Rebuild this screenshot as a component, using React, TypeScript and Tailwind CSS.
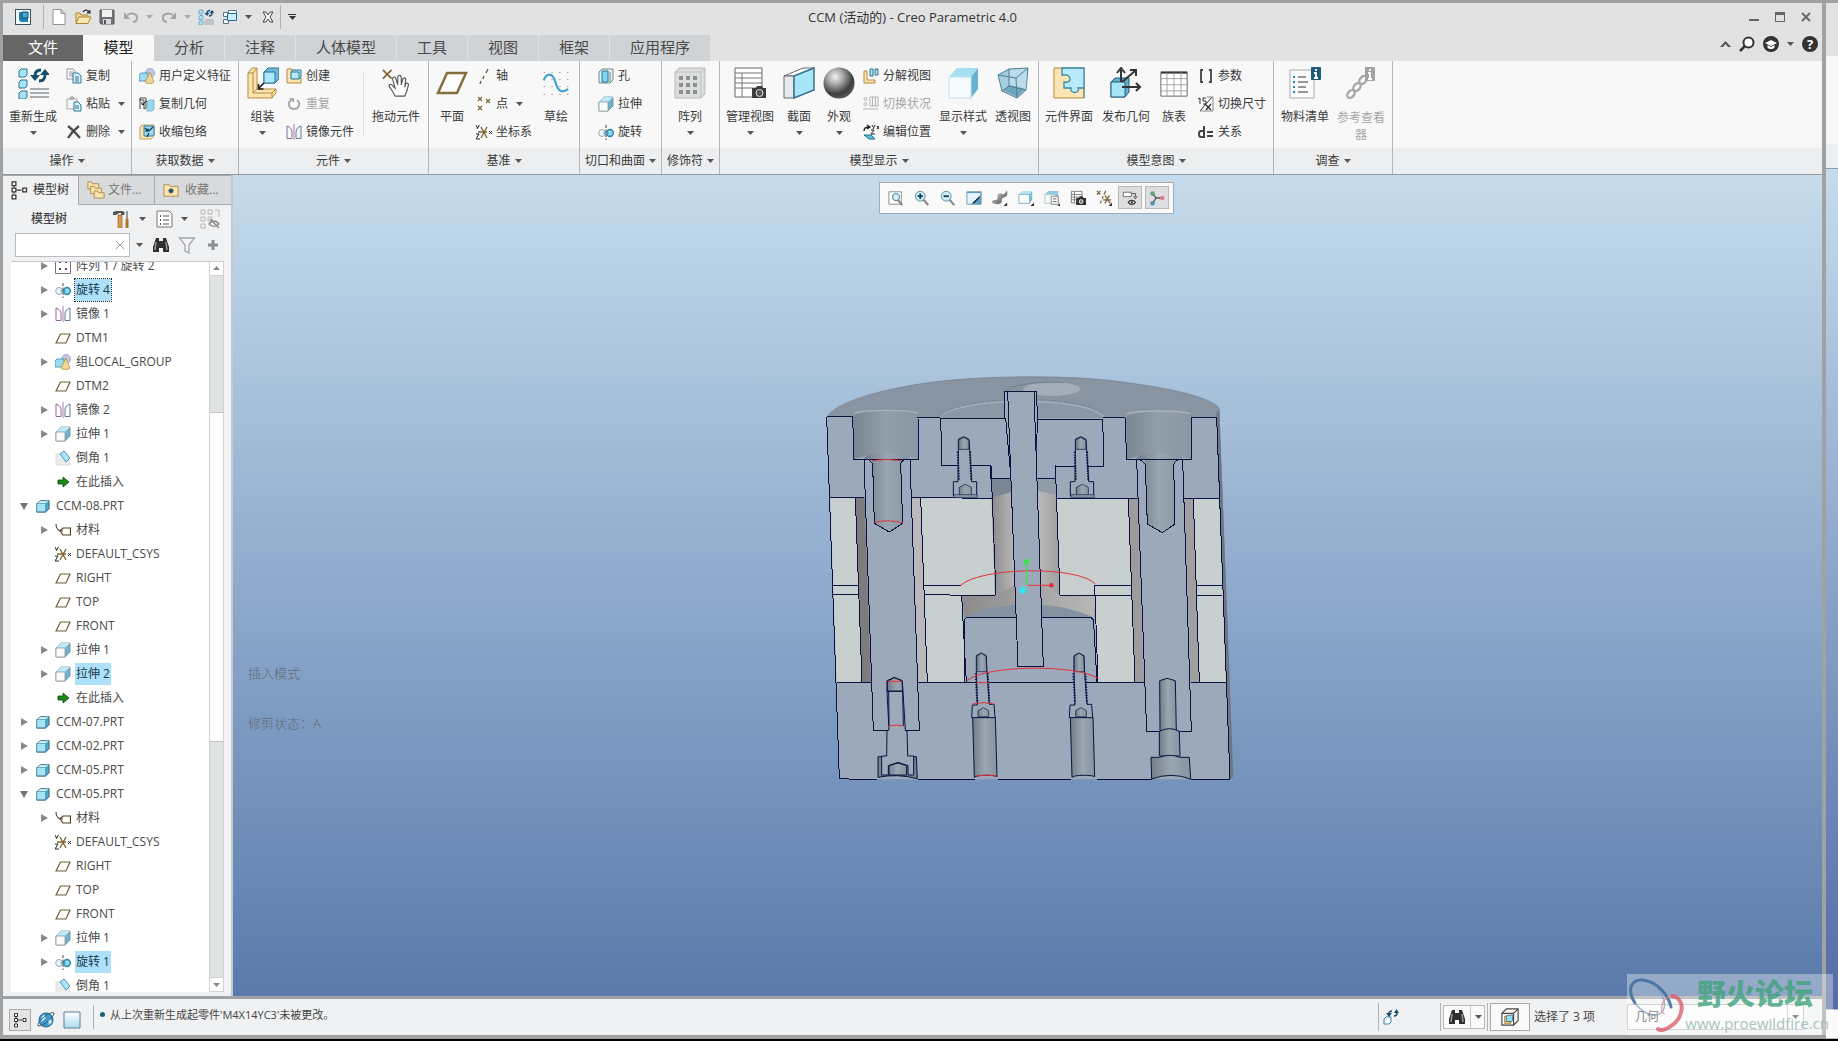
import { ReactNode } from "react";

// each entry: [viewBox side, drawing]
const art: Record<string, [number, ReactNode]> = {
  creo: [16, <><rect x="0.5" y="0.5" width="15" height="15" fill="#f4fafc" stroke="#35505f" /><path d="M4 3h9v10H6l-2-2z" fill="#1c84ae" /><path d="M7 3h6v6H7z" fill="#49a9cd" stroke="#0e4f6d" /></>],
  newFile: [16, <path d="M2 .5h8l4 4v11H2zM10 .5v4h4" fill="#fff" stroke="#8b9298" />],
  open: [16, <><path d="M1 14V4h4l1 2h7v3" fill="#f3d68f" stroke="#a98534" /><path d="M1 14.500 4 8h12l-3 6.500z" fill="#fbe7b4" stroke="#a98534" /><path d="M8 3c2-3 5-2 6 0M12 3.500l3 .5-.3-3" fill="none" stroke="#333" strokeWidth="1.300" /></>],
  save: [16, <><path d="M1 1h14v14H2l-1-1z" fill="#6f7377" stroke="#55595c" /><path d="M3 1h10v7H3z" fill="#f1f1f1" /><path d="M4 10h8v5H4z" fill="#d8dadb" /><path d="M5 11h2v4H5z" fill="#555" /></>],
  undo: [16, <><path d="M4 6c5-3 11-1 10 4-.5 2-2 3-4 3" fill="none" stroke="#a2a4a6" strokeWidth="2" /><path d="M1 3v7h6z" fill="#a2a4a6" /></>],
  redo: [16, <><path d="M12 6C7 3 1 5 2 10c.5 2 2 3 4 3" fill="none" stroke="#a2a4a6" strokeWidth="2" /><path d="M15 3v7H9z" fill="#a2a4a6" /></>],
  regen: [32, <>
    <g fill="#a5e3f8" stroke="#35708b"><path d="M2 4l2-2h6v6l-2 2H2zM2 15l2-2h6v6l-2 2H2zM2 26l2-2h6v6l-2 2H2z" /></g>
    <path d="M24 3c-4 0-6 2-6 6M22 14c4 0 6-2 6-6" fill="none" stroke="#174f6c" strokeWidth="2.800" />
    <path d="M13 8h10l-5 6zM23 8h10l-5-6z" fill="#174f6c" />
    <path d="M13 22h19M13 26h19M13 30h19" stroke="#8d9297" strokeWidth="1.600" /></>],
  windows: [16, <g fill="#fff" stroke="#54748a"><path d="M6.500 1.500h8v6h-8z" /><path d="M1.500 3.500h5v4h-5zM1.500 10.500h5v4h-5z" /><path d="M5.500 4.500h9v7h-9z" fill="#c9edfa" stroke="#1c6d90" /></g>],
  closeX: [16, <path d="M3 3h3l2 3 2-3h3l-3 5 3 5h-3l-2-3-2 3H3l3-5z" fill="#f5f5f5" stroke="#444" />],
  copy: [16, <><path d="M1 1h6l2 2v8H1z" fill="#fff" stroke="#8b9298" /><path d="M3 4h4M3 6h4M3 8h4" stroke="#8b9298" /><path d="M7 5h5l3 3v7H7z" fill="#d8f1fb" stroke="#2d7898" /><path d="M9 9h4M9 11h4M9 13h4" stroke="#2d7898" /></>],
  paste: [16, <><path d="M1 3h10v10H1z" fill="#f6f6f6" stroke="#a7abae" /><path d="M4 3c0-3 4-3 4 0z" fill="#ccc" stroke="#999" /><path d="M8 6h4l3 3v6H8z" fill="#d8f1fb" stroke="#2d7898" /><path d="M9 10h4M9 12h4" stroke="#2d7898" /></>],
  del: [16, <path d="M2 2c4 3 8 7 12 12M13 2C9 5 5 9 2 14" fill="none" stroke="#4a4a4a" strokeWidth="2.200" />],
  udf: [16, <><circle cx="11" cy="5" r="4.500" fill="#c3c8e8" stroke="#8b90b5" strokeWidth=".7" /><path d="M0 7l2-2h7v6l-2 2H0z" fill="#9adcf3" stroke="#3f85a2" strokeWidth=".8" /><path d="M11 4l4 10c-2 2-7 2-9 0z" fill="#f2d597" stroke="#b49349" strokeWidth=".8" /></>],
  copyGeom: [16, <><path d="M1 2h6v10l-2 1V4H1zM1 3v10" fill="#fff" stroke="#444" /><path d="M8 6l2-2h5v9l-2 2H8z" fill="#8fdcf5" stroke="#8a9ca5" strokeWidth=".8" /><path d="M4 8l4-3M5 8.500h-2V6" stroke="#222" fill="none" /></>],
  shrink: [16, <><path d="M1 3l2-2h12v11l-3 3H1z" fill="#fae6b5" stroke="#c5a75d" /><path d="M5 2h10v9l-2 1H5z" fill="#9ddcf2" stroke="#387f9c" /><path d="M6 4l3 3M9 4.500V7H6.500M14 3l-4 4M8 13l2-4" stroke="#163c52" strokeWidth="1.300" fill="none" /></>],
  assemble: [32, <><path d="M1 6l4-5h5v21h19v4l-4 5H1z" fill="#fbe4b0" stroke="#b58b3c" /><path d="M1 6h5v20h19v5M6 6l4-5M6 26l4-4M25 26l4-4" fill="none" stroke="#b58b3c" /><path d="M17 5l4-4h11v11l-4 4H17z" fill="#6db9d8" stroke="#2e7391" /><path d="M17 5h11v11H17z" fill="#a9e9fb" stroke="#2e7391" /><path d="M17 16l-5 5M11.500 17v5h5" fill="none" stroke="#222" strokeWidth="1.600" /></>],
  create: [16, <><path d="M1 1h5v9h9v5H1z" fill="#fbe4b0" stroke="#b58b3c" /><path d="M5 4l2-2h8v7l-2 2H5z" fill="#b4e9fa" stroke="#2e7391" /><path d="M5 4h8v7" fill="none" stroke="#2e7391" /></>],
  repeat: [16, <><path d="M5 4c-4 3-2 9 3 9s7-6 3-9" fill="none" stroke="#a9a9a9" strokeWidth="2" /><path d="M3 2h5v5z" fill="#a9a9a9" /></>],
  mirror: [16, <g fill="none"><path d="M1 14.500V2c3 1 5 3 5 6v6.500z" stroke="#8a6a9c" /><path d="M15 14.500V2c-3 1-5 3-5 6v6.500z" stroke="#5b7c9b" /><path d="M8 0v16" stroke="#b07aa8" /></g>],
  drag: [32, <><path d="M1 1l10 10M11 1 1 11" stroke="#80673a" strokeWidth="2" /><path d="M15 31c-2-5-5-8-7-12 1-3 4-1 5 1l2 2-3-11c1-3 4-2 4 1l2 6v-9c1-3 4-2 4 1v8l2-7c2-2 4 0 3 2l-1 8 1-4c2-2 4 0 3 2-1 5-2 8-4 12z" fill="#fff" stroke="#555" strokeWidth="1.300" /></>],
  plane: [32, <path d="M11 6h19l-9 20H2z" fill="#fdfdfd" stroke="#866d3e" strokeWidth="2.500" />],
  planeS: [16, <path d="M5.500 4h9.500l-4 9H1z" fill="#fffef8" stroke="#6f6141" strokeWidth="1.200" />],
  axis: [16, <path d="M12 1 10 5M8 8l-1 3M5 13l-1 3" stroke="#6f5c35" strokeWidth="1.400" />],
  points: [16, <path d="M2 1l4 4M6 1 2 5M10 3l4 4M14 3l-4 4M2 10l4 4M6 10l-4 4" stroke="#826a3e" strokeWidth="1.300" />],
  csys: [16, <><path d="M2 8h9M5 3l6 11M11 3 5 14" stroke="#7d6332" strokeWidth="1.300" /><path d="M0 1l1.500 3M3.500 1 1 5M0 10h3l-3 5h4M13 7l3 3M16 7l-3 3" fill="none" stroke="#222" strokeWidth="1" /></>],
  sketch: [32, <><path d="M2 4h28M2 12h28M2 20h28M2 29h28" stroke="#707070" strokeWidth="1.200" strokeDasharray="1 8" /><path d="M2 13c3-9 10-9 13 1s6 15 15 9" fill="none" stroke="#3fa3cd" strokeWidth="2.500" /></>],
  hole: [16, <><path d="M1 4l3-3h11v11l-3 3H1z" fill="#e5eef2" stroke="#738791" /><path d="M4 3h6v11H4z" fill="#7fd6f2" stroke="#287695" /><path d="M12 4v10" stroke="#738791" /></>],
  extrude: [16, <><path d="M1 6l5-5h9v9l-5 5H1z" fill="#6fb2cf" stroke="#6f8b98" strokeWidth=".8" /><path d="M1 6l5-5h9l-5 5z" fill="#bde8f6" /><path d="M1 6h9v9H1z" fill="#fafafa" stroke="#8e9aa0" strokeWidth=".8" /></>],
  revolve: [16, <><ellipse cx="4" cy="9" rx="3.300" ry="3.500" fill="#eef6f9" stroke="#8eacb9" /><ellipse cx="12" cy="9" rx="3.300" ry="3.500" fill="#8fd7ef" stroke="#2c85a9" strokeWidth="1.400" /><path d="M5 9h6" stroke="#4b8faa" /><path d="M8 1v15" stroke="#444" strokeDasharray="3 1.500" /></>],
  pattern: [32, <><path d="M1 5l4-4h26v26l-4 4H1z" fill="#dcdddd" stroke="#b9babb" /><path d="M1 5h26v26M27 5l4-4" fill="none" stroke="#c3c4c5" /><g fill="#8d9092"><path d="M5 9h4v4H5zM12 9h4v4h-4zM19 9h4v4h-4zM5 16h4v4H5zM12 16h4v4h-4zM19 16h4v4h-4zM5 23h4v4H5zM12 23h4v4h-4zM19 23h4v4h-4z" /></g></>],
  patternS: [16, <><path d="M.5.5h15v15H.500z" fill="#fff" stroke="#777" /><path d="M4 3h2v2H4zM10 3h2v2h-2zM4 10h2v2H4zM10 10h2v2h-2z" fill="#59497a" /></>],
  manage: [32, <><path d="M1 1h27v29H1z" fill="#fff" stroke="#666" /><path d="M1 6h27M1 11h27M1 16h27M1 21h27M8 6v24" stroke="#777" /><path d="M18 21h4l1-2h5l1 2h3v10H18z" fill="#3c3c3c" /><circle cx="25.500" cy="26" r="3.500" fill="#555" stroke="#ddd" /></>],
  viewMgr: [18, <><path d="M1.500 1.500h12v13h-12zM1 5h12M1 8h12M1 11h12M5 2v12" fill="#fff" stroke="#777" /><path d="M7 9h3l1-2h3l1 2h3v8H7z" fill="#2e2e2e" /><circle cx="12.500" cy="13" r="2.200" fill="#777" stroke="#eee" /></>],
  section: [32, <><path d="M1 9 20 1h11L11 9z" fill="#fff" stroke="#667" /><path d="M1 9h10v22H1z" fill="#e8e9ea" stroke="#667" /><path d="M11 9 31 1v22L11 31z" fill="#a6e6f8" stroke="#37718a" strokeWidth="1.500" /></>],
  sphere: [32, <><defs><radialGradient id="ball" cx=".38" cy=".3" r=".7"><stop offset="0" stopColor="#f4f4f4" /><stop offset=".35" stopColor="#a9a9a9" /><stop offset=".8" stopColor="#3c3c3c" /><stop offset="1" stopColor="#555" /></radialGradient></defs><circle cx="16" cy="16" r="15.500" fill="url(#ball)" /></>],
  explode: [16, <><path d="M1 3h3v9h8v3H1z" fill="#fbe4b0" stroke="#b58b3c" /><path d="M7 1h3v7H7zM12 1h3v6h-3z" fill="#a9e2f5" stroke="#2e7391" /></>],
  toggleState: [16, <g fill="none" stroke="#b3b3b3"><circle cx="2.500" cy="3" r="1.500" /><circle cx="2.500" cy="8" r="1.500" /><path d="M7 1h8v9H7zM9.500 1v9M12.500 1v9M0 13h15" /></g>],
  editPos: [16, <><path d="M1 7c0-3 2-4 5-4M4 1l3 2-3 2" fill="none" stroke="#222" strokeWidth="1.300" /><path d="M9 1l1 2M12 1l-2 4M14 2l2 3M16 2l-2 3M8 6h3l-3 4h4" fill="none" stroke="#222" /><path d="M1 11h7l4 4H6z" fill="#5fbfe2" stroke="#1f6f92" /></>],
  style: [32, <><path d="M2 10l8-9h21l-7 9z" fill="#a6dff0" /><path d="M24 10l7-9v21l-7 9z" fill="#65b3d0" /><path d="M2 10h22v21H2z" fill="#f5fbfd" stroke="#bfe3ee" /></>],
  persp: [32, <><path d="M1 8 12 2l19-1-2 22-9 8L5 24z" fill="#a5cfdf" stroke="#4f7f92" /><path d="M12 3l18-1-1 20-16-4z" fill="#c8e6f0" opacity=".6" /><path d="M6 23l7-5 15 4-8 8z" fill="#6ea5bb" /><path d="M1 8l18 3 12-10M19 11l1 20M12 2v17l17 4M12 19l-7 5" fill="none" stroke="#4f7f92" /></>],
  puzzle: [32, <><path d="M1 1h30v30H1z" fill="#fce5b4" stroke="#b58b3c" /><path d="M9 1h22v20h-6c3 6-9 6-7 0h-7v-6c8 2 8-8 0-7H9z" fill="#b7eafb" stroke="#3d88a6" strokeWidth="1.300" /><path d="M31 21v10" stroke="#3d88a6" /></>],
  publish: [32, <><path d="M1 15l4-4h14v14l-4 5H1z" fill="#63aecb" stroke="#255f79" /><path d="M1 15h14v15H1z" fill="#a6e6f8" stroke="#255f79" /><path d="M11 15V3M7 6l4-5 4 5M12 15 25 4M20 3h6v6M12 20h17M26 16l4 4-4 4" fill="none" stroke="#333" strokeWidth="2" /></>],
  family: [32, <><path d="M1 4h30v27H1z" fill="#fff" stroke="#555" /><path d="M1 4h30" stroke="#333" strokeWidth="2.500" /><path d="M1 11h30M1 18h30M1 25h30M8 4v27M16 4v27M24 4v27" stroke="#999" /></>],
  params: [16, <path d="M5 2H3v12h2M11 2h2v12h-2" fill="none" stroke="#444" strokeWidth="1.800" />],
  switchDim: [16, <><path d="M0 3l2-1v6M8 2H5v3h3v3H5M2 15 14 1" fill="none" stroke="#333" /><path d="M9 1h6v14H2" fill="none" stroke="#888" /><path d="M7 8l6 6M13 8l-5 6" stroke="#333" strokeWidth="1.400" /></>],
  relation: [16, <path d="M6 7H3Q1 7 1 10t2 3h3M6 2v12M9 8h6M9 12h6" fill="none" stroke="#444" strokeWidth="2" />],
  bom: [32, <><path d="M1 3h20l4 4v24H1z" fill="#fbfbfb" stroke="#aaa" /><path d="M9 10h8M9 15h10M9 20h8M9 25h10" stroke="#777" strokeWidth="1.300" /><path d="M4 10h2M4 15h2M4 20h2M4 25h2" stroke="#2684ad" strokeWidth="2" /><rect x="22" y="0" width="10" height="13" rx="1" fill="#1d5a77" /><path d="M27 2v2M25 6h2v5M25 11h4" stroke="#fff" strokeWidth="1.800" fill="none" /></>],
  refView: [32, <><g fill="none" stroke="#a9a9a9" strokeWidth="2.400"><ellipse cx="6" cy="27" rx="4.500" ry="3" transform="rotate(-50 6 27)" /><ellipse cx="12" cy="20" rx="4.500" ry="3" transform="rotate(-50 12 20)" /><ellipse cx="18" cy="13" rx="4.500" ry="3" transform="rotate(-50 18 13)" /></g><rect x="20" y="0" width="10" height="14" rx="1" fill="#a2a2a2" /><path d="M25 2v2M23 6h2v6M23 12h4" stroke="#fff" strokeWidth="1.800" fill="none" /></>],
  tree: [16, <><path d="M2.500 1.500h3v3h-3zM2.500 6.500h3v3h-3zM2.500 12h3v3h-3zM11 6.500h3v3h-3z" fill="#fff" stroke="#333" /><path d="M4 5v1M4 10v1M6 8h4" stroke="#333" /></>],
  folders: [20, <g fill="#f9e3ae" stroke="#a98b4a"><path d="M1 9V1h4l1 2h7v6z" /><path d="M4 14V6h4l1 2h7v6z" /><path d="M8 19v-8h4l1 2h6v6z" /></g>],
  favs: [18, <><path d="M1 16V3h6l1 2h9v11z" fill="#f9e3ae" stroke="#a98b4a" /><path d="M9 7v6M6 10h6M7 8l4 4M11 8l-4 4" stroke="#1c4c66" strokeWidth="1.300" /></>],
  tools: [18, <><path d="M1 2l3-1h7l2 2-1 2H9V3H7l-3 2H1z" fill="#555" /><path d="M6 5h4v13H6z" fill="#d69a4b" stroke="#9a6927" strokeWidth=".7" /><path d="M15 1v8" stroke="#777" strokeWidth="1.500" /><path d="M13.500 9h3v9h-3z" fill="#b4742e" /></>],
  list: [18, <><path d="M1 1h12l3 3v13H1z" fill="#fff" stroke="#777" /><path d="M7 6h6M7 10h6M7 14h6" stroke="#555" /><path d="M4 6h1M4 10h1M4 14h1" stroke="#555" strokeWidth="2" /></>],
  treeOff: [20, <g fill="none" stroke="#b5b5b5"><path d="M1 1h4v4H1zM1 8h4v4H1zM1 15h4v4H1zM8 1h4v4H8zM15 1h4v7M8 8h4v4H8z" /><path d="M9 15c3-4 7-4 10 0-3 3-7 3-10 0zM10 10l9 9" stroke="#888" strokeWidth="1.400" /></g>],
  binoc: [18, <><path d="M4 2h3v3h4V2h3l3 9v5h-6v-4H7v4H1v-5z" fill="#2f2f2f" /><path d="M4 6l-1 8M14 6l1 8" stroke="#999" strokeWidth="1.500" /></>],
  filter: [18, <path d="M1.500 2h15L11 9v8l-4-2V9z" fill="#f4f4f4" stroke="#a3a7ab" strokeWidth="1.300" />],
  plus: [14, <path d="M7 2v10M2 7h10" stroke="#8c8f92" strokeWidth="3" />],
  chamfer: [16, <><path d="M1 4h5l9 8v3H1z" fill="#ececec" stroke="#d3d3d3" strokeWidth=".7" /><path d="M5 4l4-3 6 7-4 4z" fill="#a9e3f5" stroke="#5197b1" /></>],
  insert: [16, <path d="M3 6h5V3l6 5-6 5v-3H3z" fill="#1e8a14" stroke="#0b4707" strokeWidth=".8" />],
  part: [16, <><path d="M1 5l4-3h10v9l-4 4H1z" fill="#4fa6c6" stroke="#2e5d70" /><path d="M1 5h10v9.500H1z" fill="#a4e6f8" stroke="#4a8299" strokeWidth=".7" /><path d="M1.500 4.500 5 2.500h9.500l-3.500 2z" fill="#d5f5fd" /></>],
  material: [16, <><path d="M5 9l3-3h7.500v7H8z" fill="#fffdf8" stroke="#4d3f27" strokeWidth="1.200" /><path d="M1 2c0 4 1 7 7 7" fill="none" stroke="#4d3f27" strokeWidth="1.200" /></>],
  globe: [18, <><circle cx="9" cy="9" r="7" fill="#3b9bcb" stroke="#1f6389" /><path d="M5 5c3-2 4 1 3 3s-3 1-4 4M11 9c2-1 4 0 4 2l-3 3z" fill="#cdeaf5" /><path d="M1 15C-1 11 14-1 17 2c1 2-9 13-16 13z" fill="none" stroke="#3d6274" /></>],
  blank: [18, <><defs><linearGradient id="pane" x2="0" y2="1"><stop offset="0" stopColor="#fff" /><stop offset="1" stopColor="#a9dcee" /></linearGradient></defs><path d="M1 1h16v16H1z" fill="url(#pane)" stroke="#5b7f90" /></>],
  zoomFit: [18, <><path d="M1 2h14v14H1z" fill="#fff" stroke="#888" /><path d="M11 11l5 6" stroke="#888" strokeWidth="2.500" /><circle cx="9" cy="8" r="4" fill="#d5eefa" stroke="#3a6f8a" /></>],
  zoomIn: [18, <><path d="M10 10l6 7" stroke="#888" strokeWidth="2.500" /><circle cx="7" cy="7" r="5.500" fill="#cfeefa" stroke="#51849b" /><path d="M4 7h6M7 4v6" stroke="#163e55" strokeWidth="2" /></>],
  zoomOut: [18, <><path d="M10 10l6 7" stroke="#888" strokeWidth="2.500" /><circle cx="7" cy="7" r="5.500" fill="#cfeefa" stroke="#51849b" /><path d="M4 7h6" stroke="#163e55" strokeWidth="2" /></>],
  repaint: [18, <><path d="M1 2h16v14H1z" fill="#e4f6fc" stroke="#7396a4" /><path d="M17 3v13H4C12 14 14 9 17 3z" fill="#5d9fba" /><path d="M1 2h16v1.500H1z" fill="#5b9cb8" /><path d="M15 8l-7 7" stroke="#113" strokeWidth="1.500" /></>],
  render: [18, <><defs><linearGradient id="tube" x2="1" y2="1"><stop offset="0" stopColor="#eee" /><stop offset=".5" stopColor="#8f8f8f" /><stop offset="1" stopColor="#444" /></linearGradient></defs><path d="M0 13c1-3 5-1 6-3s-1-5 2-6 4 2 6 0 2-4 3-3c1 3 0 6-2 7s-4 1-4 3 0 5-5 5c-3 0-6-1-6-3z" fill="url(#tube)" /><path d="M17 14v4h-4z" fill="#333" /></>],
  shade: [18, <><path d="M1 5l4-4h11v10l-3 4H1z" fill="#72bfdb" /><path d="M1 5l4-4h11l-3 4z" fill="#b5e5f3" /><path d="M1 5h12v10H1z" fill="#f8fcfd" stroke="#6ea4b8" strokeWidth=".8" /><path d="M18 14v4h-4z" fill="#333" /></>],
  saved: [18, <><path d="M1 5l4-4h11v10l-3 4H1z" fill="#8ecbe0" /><path d="M1 5h12v10H1z" fill="#f8fcfd" stroke="#9fbfcb" strokeWidth=".8" /><path d="M8 7h8v9H8z" fill="#fff" stroke="#777" /><path d="M10 10h4M10 13h4" stroke="#555" /><path d="M18 15v3h-3z" fill="#333" /></>],
  annot: [18, <><path d="M1.500 2.500h9v5h-9z" fill="#fff" stroke="#666" /><path d="M11 4h4v4M13 7l2 3 2-3" fill="none" stroke="#444" /><path d="M7 14c2-3 6-3 8 0-2 3-6 3-8 0z" fill="#fff" stroke="#333" strokeWidth="1.300" /><circle cx="11" cy="14" r="1.300" fill="#333" /></>],
  datums: [18, <><path d="M1 1l4 4M5 1 1 5M11 1 9 5M8 7l-1 3M6 12l-1 3M8 11h9M10 6l6 9M15 6l-5 9" stroke="#7d6332" strokeWidth="1.400" /><path d="M18 14v4h-4z" fill="#333" /></>],
  spin: [18, <><path d="M4 4l4 5h6M8 9l-4 6" fill="none" stroke="#555" strokeWidth="1.500" /><circle cx="4" cy="4" r="2.500" fill="#5a9f7c" /><circle cx="4" cy="15" r="2.500" fill="#4a92b4" /><circle cx="15" cy="9" r="2.500" fill="#e0808c" /></>],
  regenS: [16, <><path d="M1 10l2-2h5v5l-2 2H1z" fill="#fff" stroke="#3a84a3" /><path d="M9 2c-2 0-3 1-3 3M11 7c2 0 3-1 3-3" fill="none" stroke="#174f6c" strokeWidth="1.500" /><path d="M3 4h6L6 8zM11 4h5l-2.500-4z" fill="#174f6c" /></>],
  box: [20, <><path d="M1 6l5-5h13v13l-5 5H1z" fill="#fffdf6" stroke="#444" strokeWidth="1.300" /><path d="M1 6h13v13M14 6l5-5" fill="none" stroke="#444" strokeWidth="1.300" /><path d="M4 9h7v8H4z" fill="#f3cf7e" stroke="#a5803a" /><path d="M6 9l2-1h5v6l-2 1H6z" fill="#9adcf3" stroke="#35708b" /></>],
};

const Icon = ({ name, className = "size-4" }: { name: string; className?: string }) => (
  <svg viewBox={`0 0 ${art[name][0]} ${art[name][0]}`} className={`${className} shrink-0`} aria-hidden="true">
    {art[name][1]}
  </svg>
);

const Caret = ({ className = "text-[#555]" }: { className?: string }) => (
  <svg viewBox="0 0 7 4" className={`w-[7px] h-1 shrink-0 ${className}`} aria-hidden="true">
    <path d="M0 0h7L3.500 4z" fill="currentColor" />
  </svg>
);

type BigProps = { icon: string; label: string; width: string; caret?: boolean; size?: string };

const Big = ({ icon, label, width, caret, size = "size-8" }: BigProps) => (
  <button className={`${width} shrink-0 flex flex-col items-center pt-1.5`}>
    <span className="h-8 mb-1.5 flex items-center"><Icon name={icon} className={size} /></span>
    <span className="leading-6 whitespace-nowrap">{label}</span>
    {caret ? <Caret className="text-[#555] mt-0.5" /> : null}
  </button>
);

type SmallItem = { icon: string; label: string; caret?: boolean; disabled?: boolean };

const SmallColumn = ({ items, className = "" }: { items: SmallItem[]; className?: string }) => (
  <div className={`flex flex-col shrink-0 pt-px ${className}`}>
    {items.map((it) => (
      <button key={it.label} disabled={it.disabled} className={`h-7 flex items-center gap-1 whitespace-nowrap ${it.disabled ? "text-[#a6a6a6]" : ""}`}>
        <Icon name={it.icon} />
        <span>{it.label}</span>
        {it.caret ? <Caret className="text-[#555] ml-1" /> : null}
      </button>
    ))}
  </div>
);

const Group = ({ title, width, children }: { title: string; width: string; children: ReactNode }) => (
  <section className={`${width} shrink-0 flex flex-col border-r border-[#b4b7ba]`}>
    <div className="h-[87px] flex items-start">{children}</div>
    <button className="h-[26px] bg-[#eceeef] flex items-center justify-center gap-1 whitespace-nowrap">
      {title}
      <Caret />
    </button>
  </section>
);

const ribbonTabs = [
  { label: "分析", width: "w-[71px]" },
  { label: "注释", width: "w-[71px]" },
  { label: "人体模型", width: "w-[101px]" },
  { label: "工具", width: "w-[71px]" },
  { label: "视图", width: "w-[71px]" },
  { label: "框架", width: "w-[71px]" },
  { label: "应用程序", width: "w-[101px]" },
];

const TitleBar = () => (
  <header className="h-8 pb-[3px] grid grid-cols-[1fr_auto_1fr] items-center">
    <div className="flex items-center pl-3 h-full text-[#555]">
      <button aria-label="Creo"><Icon name="creo" /></button>
      <span className="w-px h-6 bg-[#b0b2b4] ml-3 mr-[7px]" />
      <button aria-label="新建"><Icon name="newFile" /></button>
      <button aria-label="打开" className="ml-2"><Icon name="open" /></button>
      <button aria-label="保存" className="ml-2"><Icon name="save" /></button>
      <button aria-label="撤消" className="ml-2"><Icon name="undo" /></button>
      <Caret className="text-[#aaa] ml-[7px]" />
      <button aria-label="重做" className="ml-2"><Icon name="redo" /></button>
      <Caret className="text-[#aaa] ml-[7px]" />
      <button aria-label="重新生成" className="ml-[7px]"><Icon name="regen" /></button>
      <button aria-label="窗口" className="ml-2"><Icon name="windows" /></button>
      <Caret className="ml-[7px]" />
      <button aria-label="关闭窗口" className="ml-2"><Icon name="closeX" /></button>
      <span className="w-px h-6 bg-[#b0b2b4] mx-1" />
      <button aria-label="自定义" className="ml-[3px] flex flex-col items-center gap-px"><span className="w-2 h-px bg-[#333]" /><Caret className="text-[#333]" /></button>
    </div>
    <h1 className="text-[13px] text-[#333]">CCM (活动的) - Creo Parametric 4.0</h1>
    <div className="flex items-center justify-end gap-4 pr-[11px] text-[#666]">
      <button aria-label="最小化" className="h-3 w-[10px] flex items-end"><span className="w-full h-0.5 mb-0.5 bg-[#666]" /></button>
      <button aria-label="最大化" className="h-[10px] w-[10px] border border-t-3 border-[#666]" />
      <button aria-label="关闭">
        <svg viewBox="0 0 10 10" className="size-[10px]"><path d="M1 1l8 8M9 1 1 9" stroke="#666" strokeWidth="1.800" /></svg>
      </button>
    </div>
  </header>
);

const TabBar = () => (
  <nav className="h-[26px] flex text-[15px] text-[#4a4a4a]">
    <button className="w-20 bg-[#666] text-white">文件</button>
    <button className="w-[71px] bg-[#f8f8f8] text-[#222]">模型</button>
    {ribbonTabs.map((t) => (
      <button key={t.label} className={`${t.width} bg-[#d0d3d6] border-r border-[#dfe0e1]`}>{t.label}</button>
    ))}
    <div className="ml-auto h-[18px] flex items-center pr-1">
      <button aria-label="折叠功能区" className="mr-2"><svg viewBox="0 0 11 6" className="w-[11px] h-1.5"><path d="M0 6 5.500 0 11 6H8L5.500 3 3 6z" fill="#555" /></svg></button>
      <button aria-label="搜索" className="mr-2"><svg viewBox="0 0 16 16" className="size-4"><circle cx="9.500" cy="6.500" r="5" fill="#fff" stroke="#333" strokeWidth="2" /><path d="M6 10l-5 5" stroke="#333" strokeWidth="2.500" /></svg></button>
      <button aria-label="学习" className="mr-2"><svg viewBox="0 0 16 16" className="size-4"><circle cx="8" cy="8" r="8" fill="#333" /><path d="M2 7l6-3 6 3-6 3zM4.500 9v2.500c2 2 5 2 7 0V9L8 11z" fill="#fff" /></svg></button>
      <Caret className="text-[#555] mr-2" />
      <button aria-label="帮助" className="size-4 rounded-full bg-[#333] text-white text-[13px] leading-4 font-bold">?</button>
    </div>
  </nav>
);

const Ribbon = () => (
  <div className="flex bg-[#f8f8f8] border-b border-[#8f9aa3] text-xs text-[#3a3a3a]">
    <Group title="操作" width="w-[129px]">
      <Big icon="regen" label="重新生成" width="w-[60px]" caret />
      <SmallColumn className="pl-[3px]" items={[{ icon: "copy", label: "复制" }, { icon: "paste", label: "粘贴", caret: true }, { icon: "del", label: "删除", caret: true }]} />
    </Group>
    <Group title="获取数据" width="w-[107px]">
      <SmallColumn className="pl-[7px]" items={[{ icon: "udf", label: "用户定义特征" }, { icon: "copyGeom", label: "复制几何" }, { icon: "shrink", label: "收缩包络" }]} />
    </Group>
    <Group title="元件" width="w-[190px]">
      <Big icon="assemble" label="组装" width="w-[47px]" caret />
      <SmallColumn items={[{ icon: "create", label: "创建" }, { icon: "repeat", label: "重复", disabled: true }, { icon: "mirror", label: "镜像元件" }]} className="w-[77px]" />
      <span className="w-px h-16 mt-3 bg-[#dcdddd]" />
      <Big icon="drag" label="拖动元件" width="w-[64px]" size="size-7" />
    </Group>
    <Group title="基准" width="w-[151px]">
      <Big icon="plane" label="平面" width="w-[46px]" />
      <SmallColumn items={[{ icon: "axis", label: "轴" }, { icon: "points", label: "点", caret: true }, { icon: "csys", label: "坐标系" }]} className="pl-px w-[60px]" />
      <Big icon="sketch" label="草绘" width="w-[42px]" size="size-7" />
    </Group>
    <Group title="切口和曲面" width="w-[82px]">
      <SmallColumn items={[{ icon: "hole", label: "孔" }, { icon: "extrude", label: "拉伸" }, { icon: "revolve", label: "旋转" }]} className="pl-[18px]" />
    </Group>
    <Group title="修饰符" width="w-[58px]">
      <Big icon="pattern" label="阵列" width="w-14" caret />
    </Group>
    <Group title="模型显示" width="w-[319px]">
      <Big icon="manage" label="管理视图" width="w-[60px]" caret />
      <Big icon="section" label="截面" width="w-[38px]" caret />
      <Big icon="sphere" label="外观" width="w-[42px]" caret />
      <SmallColumn items={[{ icon: "explode", label: "分解视图" }, { icon: "toggleState", label: "切换状况", disabled: true }, { icon: "editPos", label: "编辑位置" }]} className="pl-[3px] w-[75px]" />
      <Big icon="style" label="显示样式" width="w-[56px]" caret />
      <Big icon="persp" label="透视图" width="w-[44px]" />
    </Group>
    <Group title="模型意图" width="w-[235px]">
      <Big icon="puzzle" label="元件界面" width="w-[60px]" />
      <Big icon="publish" label="发布几何" width="w-[54px]" />
      <Big icon="family" label="族表" width="w-[42px]" size="size-7" />
      <SmallColumn items={[{ icon: "params", label: "参数" }, { icon: "switchDim", label: "切换尺寸" }, { icon: "relation", label: "关系" }]} className="pl-[3px]" />
    </Group>
    <Group title="调查" width="w-[119px]">
      <Big icon="bom" label="物料清单" width="w-[62px]" />
      <button disabled className="w-[50px] flex flex-col items-center pt-1.5 text-[#a6a6a6]">
        <span className="h-8 mb-[10px] flex items-center"><Icon name="refView" className="size-8" /></span>
        <span className="leading-[17px]">参考查看器</span>
      </button>
    </Group>
    <div className="grow flex flex-col justify-end"><div className="h-[26px] bg-[#eceeef]" /></div>
  </div>
);

type Node = { icon: string; label: string; level?: 1 | 2; state?: "open" | "closed"; selected?: boolean; focused?: boolean };

const nodes: Node[] = [
  { icon: "patternS", label: "阵列 1 / 旋转 2", state: "closed" },
  { icon: "revolve", label: "旋转 4", state: "closed", selected: true, focused: true },
  { icon: "mirror", label: "镜像 1", state: "closed" },
  { icon: "planeS", label: "DTM1" },
  { icon: "udf", label: "组LOCAL_GROUP", state: "closed" },
  { icon: "planeS", label: "DTM2" },
  { icon: "mirror", label: "镜像 2", state: "closed" },
  { icon: "extrude", label: "拉伸 1", state: "closed" },
  { icon: "chamfer", label: "倒角 1" },
  { icon: "insert", label: "在此插入" },
  { icon: "part", label: "CCM-08.PRT", level: 1, state: "open" },
  { icon: "material", label: "材料", state: "closed" },
  { icon: "csys", label: "DEFAULT_CSYS" },
  { icon: "planeS", label: "RIGHT" },
  { icon: "planeS", label: "TOP" },
  { icon: "planeS", label: "FRONT" },
  { icon: "extrude", label: "拉伸 1", state: "closed" },
  { icon: "extrude", label: "拉伸 2", state: "closed", selected: true },
  { icon: "insert", label: "在此插入" },
  { icon: "part", label: "CCM-07.PRT", level: 1, state: "closed" },
  { icon: "part", label: "CCM-02.PRT", level: 1, state: "closed" },
  { icon: "part", label: "CCM-05.PRT", level: 1, state: "closed" },
  { icon: "part", label: "CCM-05.PRT", level: 1, state: "open" },
  { icon: "material", label: "材料", state: "closed" },
  { icon: "csys", label: "DEFAULT_CSYS" },
  { icon: "planeS", label: "RIGHT" },
  { icon: "planeS", label: "TOP" },
  { icon: "planeS", label: "FRONT" },
  { icon: "extrude", label: "拉伸 1", state: "closed" },
  { icon: "revolve", label: "旋转 1", state: "closed", selected: true },
  { icon: "chamfer", label: "倒角 1" },
];

const TreeRow = ({ node }: { node: Node }) => (
  <li className={`h-6 flex items-center ${node.level === 1 ? "pl-2" : "pl-7"}`}>
    <svg viewBox="0 0 10 10" className="size-[10px] shrink-0">
      {node.state === "closed" ? <path d="M2 1l7 4-7 4z" fill="#888" /> : null}
      {node.state === "open" ? <path d="M1 2h8L5 9z" fill="#777" /> : null}
    </svg>
    <Icon name={node.icon} className={node.level === 1 ? "size-[14px] ml-[7px]" : "size-4 ml-1.5"} />
    <span
      className={`ml-1 px-px h-[22px] leading-[22px] whitespace-nowrap ${node.level === 1 ? "pl-0.5" : ""} ${node.selected ? "bg-[#ade1f9] text-[#1d3a4c]" : ""} ${node.focused ? "outline outline-dotted outline-[#222]" : ""}`}
    >
      {node.label}
    </span>
  </li>
);

const Sidebar = () => (
  <aside className="w-[230px] shrink-0 flex flex-col min-h-0 bg-[#f0f1f2] border-r-2 border-[#c3c9cf] text-xs text-[#4a4a4a]">
    <div className="h-[30px] shrink-0 flex border-t border-[#a5a7a9]">
      <button className="w-[75px] flex items-center gap-1 pl-1.5 text-[#333]"><Icon name="tree" className="size-5" />模型树</button>
      <button className="w-[76px] flex items-center gap-[3px] pl-2 bg-[#d9dadb] border-l border-b border-[#a9abad] text-[#777]"><Icon name="folders" className="size-[18px]" />文件...</button>
      <button className="grow flex items-center gap-1.5 pl-2 bg-[#d9dadb] border-l border-b border-[#a9abad] text-[#777]"><Icon name="favs" className="size-4" />收藏...</button>
    </div>
    <div className="h-7 shrink-0 flex items-center pl-7">
      <span className="font-medium text-[#444] w-[81px]">模型树</span>
      <button aria-label="设置"><Icon name="tools" className="size-[18px]" /></button>
      <Caret className="text-[#555] ml-[9px]" />
      <button aria-label="显示" className="ml-[10px]"><Icon name="list" className="size-[18px]" /></button>
      <Caret className="text-[#555] ml-[7px]" />
      <button aria-label="隐藏" className="ml-3"><Icon name="treeOff" className="size-5" /></button>
    </div>
    <div className="h-7 shrink-0 flex items-start pl-3">
      <label className="w-[115px] h-6 flex items-center bg-white border border-[#b9bcbf] pr-1">
        <input aria-label="搜索模型树" className="w-full min-w-0 outline-none" />
        <svg viewBox="0 0 10 10" className="size-[10px] shrink-0"><path d="M1 1l8 8M9 1 1 9" stroke="#999" /></svg>
      </label>
      <div className="h-6 flex items-center">
        <Caret className="text-[#555] ml-1.5" />
        <button aria-label="查找" className="ml-[9px]"><Icon name="binoc" className="size-[18px]" /></button>
        <button aria-label="过滤" className="ml-2"><Icon name="filter" className="size-[18px]" /></button>
        <button aria-label="添加" className="ml-[10px]"><Icon name="plus" className="size-[14px]" /></button>
      </div>
    </div>
    <div className="grow min-h-0 flex pl-2 pr-[7px] mb-1">
      <ul className="grow min-w-0 overflow-hidden bg-white border-t border-[#c5c7c9]">
        <li className="-mt-2" />
        {nodes.map((n, i) => <TreeRow key={i} node={n} />)}
      </ul>
      <div className="w-[15px] shrink-0 flex flex-col bg-[#e1e2e4] border-x border-[#cfd1d3]">
        <button aria-label="向上" className="h-[15px] bg-white border-y border-[#cfd1d3] flex items-center justify-center"><Caret className="text-[#888] rotate-180" /></button>
        <div className="basis-[136px]" />
        <div className="basis-[330px] bg-[#fdfdfd] border-y border-[#c3c5c7]" />
        <div className="grow" />
        <button aria-label="向下" className="h-[15px] bg-white border-y border-[#cfd1d3] flex items-center justify-center"><Caret className="text-[#888]" /></button>
      </div>
    </div>
  </aside>
);

// section view of the cylinder, 3 drawing units per pixel
const Bolt = ({ d, thread }: { d: string; thread: string }) => (
  <g fill="#9ca9ba" stroke="#0b1240" strokeWidth="3">
    <path d={d} />
    <path d={thread} strokeDasharray="4 4" strokeWidth="6" fill="none" />
  </g>
);

const SectionModel = () => (
  <svg viewBox="0 0 1260 1260" className="absolute left-[587px] top-[195px] size-[420px]" role="img" aria-label="CCM">
    <defs>
      <linearGradient id="bore"><stop offset="0" stopColor="#7a8592" /><stop offset=".5" stopColor="#929eaa" /><stop offset="1" stopColor="#8b96a4" /></linearGradient>
      <linearGradient id="hole2"><stop offset="0" stopColor="#717c87" /><stop offset=".5" stopColor="#9aa7b3" /><stop offset="1" stopColor="#87929f" /></linearGradient>
      <linearGradient id="wallL"><stop offset="0" stopColor="#7b7b7c" /><stop offset="1" stopColor="#9d9d9e" /></linearGradient>
      <linearGradient id="wallR"><stop offset="0" stopColor="#bababa" /><stop offset="1" stopColor="#9f9fa0" /></linearGradient>
      <linearGradient id="coreL"><stop offset="0" stopColor="#8b8b8c" /><stop offset="1" stopColor="#b8b8b8" /></linearGradient>
    </defs>
    <path d="M20 140C60 90 200 55 340 36 500 15 780 15 920 38 1080 58 1190 90 1198 118L1240 1220l-10 8H60z" fill="#8894a2" />
    <path d="M1190 130l8-12L1240 1220l-10 8z" fill="#6c7783" />
    <path d="M25 136C60 90 200 55 340 36 500 15 780 15 920 38 1080 58 1190 90 1198 118" fill="none" stroke="#6f7c8c" strokeWidth="2" />
    <path d="M20 140l80 1h190l70 3h490l65-2h200l75 1 40 1085H58z" fill="#9ca9ba" />
    {/* top hole and recess */}
    <ellipse cx="695" cy="57" rx="86" ry="20" fill="#a2adb9" /><path d="M560 62c20-22 120-28 170-24" fill="none" stroke="#74808e" strokeWidth="3" />
    <path d="M360 144c30-70 460-75 495 0z" fill="#8c98a6" /><path d="M362 140c60-60 430-62 490 0" fill="none" stroke="#a5b1bf" strokeWidth="4" />
    <path d="M362 138c60-65 430-67 490-2" fill="none" stroke="#6c7988" strokeWidth="1.500" strokeDasharray="12 6" />
    {/* magnet rings */}
    <g fill="#c8d0cf">
      <path d="M30 383h76l20 554H50zM302 383l213 2 10 291-100 2 12 259H322zM710 385h215l20 552H832l-7-259-105-2zM1120 385h78l20 552h-80z" />
    </g>
    <path d="M106 383h28l19 554h-27zM925 385h28l19 552h-27z" fill="url(#wallL)" />
    <path d="M272 383h30l20 554h-29zM1092 385h28l18 552h-25z" fill="url(#wallR)" />
    <path d="M515 325h62l2 60-1-20-63 20z" fill="#7a8693" />
    <path d="M515 385l62-20 8 311h-60z" fill="url(#coreL)" />
    <path d="M650 325h58v60l-58-20z" fill="#919da9" />
    <path d="M652 362l58 14 10 300h-58z" fill="url(#wallR)" />
    <path d="M425 676l100-2 60-28h78l60 30h104l-7 69H433z" fill="url(#coreL)" />
    <path d="M435 742c40-20 95-34 150-37h80c60 3 120 20 155 37z" fill="#8592a1" />
    <path d="M433 742h387l12 195H437z" fill="#9ca9ba" />
    {/* counterbored screws */}
    <path d="M99 141c15-26 185-26 195 0l2 127c-30-16-160-18-194 0z" fill="url(#bore)" />
    <path d="M102 130c30-12 160-12 192 0" fill="none" stroke="#a8b4c0" strokeWidth="4" />
    <path d="M918 143c15-26 185-26 195 0l2 125c-30-16-160-16-194 0z" fill="url(#bore)" />
    <path d="M920 132c30-12 160-12 192 0" fill="none" stroke="#a8b4c0" strokeWidth="4" />
    <path d="M132 268c0-10 20-18 70-18s70 8 68 18h-25l2 190-39 26-44-26-8-190z" fill="url(#hole2)" />
    <path d="M950 268c0-10 20-18 70-18s70 8 68 18h-25l2 192-39 26-44-26-8-192z" fill="url(#hole2)" />
    <g fill="none" stroke="#0b1240" strokeWidth="3" shapeRendering="crispEdges">
      <path d="M20 140h78l4 128h194l-2-125h66M850 143h65l5 126h194v-126h76M20 140l38 1085 42 3h70M1190 143l40 1085" />
      <path d="M132 268c15-4 22 8 26 14l5 178 45 26 40-26-6-178c3-8 10-18 26-14M132 268l28 814h138l-28-814" />
      <path d="M950 270c15-4 22 8 26 14l6 178 45 26 38-26-4-178c3-8 10-18 26-14M950 270l30 814h134l-26-814" />
      <path d="M30 383h103M272 383h61l182 2M708 385h245M1090 385h108M106 383l20 554M302 383l20 554M925 385l20 552M1120 385l18 552" />
      <path d="M38 646h78M38 673h78M312 646h110M312 673h70l14 3h128M824 646h110M720 676h215M1130 646h77M1130 676h77" />
      <path d="M50 937h103M293 937h679M1113 937h105" />
    </g>
    {/* upper plug */}
    <g fill="#9ca9ba" stroke="#0b1240" strokeWidth="3" shapeRendering="crispEdges">
      <path d="M362 145h195l16 180h-60l-2-39H366z" />
      <path d="M652 149h196l4 140H706v36h-58z" />
    </g>
    <path d="M513 286l15 390M706 286l14 390M425 676l14 261M824 646l10 291M513 325h62M648 325h60" fill="none" stroke="#0b1240" strokeWidth="3" shapeRendering="crispEdges" />
    <path d="M433 937V757q0-15 12-15h362q14 0 14 15l10 180" fill="none" stroke="#0b1240" strokeWidth="3" shapeRendering="crispEdges" />
    <path d="M553 144V65h97l2 84h-6l24 741h-76L566 144z" fill="#9ca9ba" />
    <path d="M555 65h95M553 144V65h10l31 825h76M652 149l-2-84h-8l28 825" fill="none" stroke="#0b1240" strokeWidth="3" shapeRendering="crispEdges" />
    {/* set screws */}
    {[0, 351].map((x) => (
      <g key={x} transform={`translate(${x} 0)`}>
        <Bolt d="M415 238v-30l16-8 16 8 2 30 6 97h15v42h-70v-42h14z" thread="M413 245l4 88M450 245l4 88" />
        <path d="M416 238v-28l15-8 15 8 1 28z" fill="url(#hole2)" stroke="#0b1240" strokeWidth="2" />
        <path d="M418 376v-24l18-9 18 9v24z" fill="url(#hole2)" stroke="#0b1240" strokeWidth="2" />
        <path d="M402 374h70v9h-70z" fill="#8592a1" stroke="#0b1240" strokeWidth="1.500" />
      </g>
    ))}
    {[0, 293].map((x) => (
      <g key={x} transform={`translate(${x} 0)`}>
        <path d="M458 1042h68l5 178c-10-6-60-6-68 2z" fill="url(#hole2)" stroke="#0b1240" strokeWidth="3" />
        <Bolt d="M469 905v-48l15-8 15 8 2 48 7 98h14l3 40h-70l2-38h15z" thread="M467 910l5 90M503 910l5 90" />
        <path d="M470 905v-47l14-8 14 8 2 47z" fill="url(#hole2)" stroke="#0b1240" strokeWidth="2" />
        <path d="M474 1040v-18l16-9 16 9v18z" fill="url(#hole2)" stroke="#0b1240" strokeWidth="2" />
      </g>
    ))}
    {/* left bottom bolt */}
    <path d="M174 1160h115l3 66q-60-16-118-4z" fill="#75818e" stroke="#0b1240" strokeWidth="3" />
    <g fill="#9ca9ba" stroke="#0b1240" strokeWidth="3">
      <path d="M201 964v-32l22-10 24 10 9 150 5 2 2 74h18v57h-17v-28l-30-10-29 10v28h-20v-57h15l1-76 6-2z" />
      <path d="M201 964h46M248 964l2 104M206 964l1 104" fill="none" />
      <path d="M202 963v-30l21-10 23 10 2 30zM207 1215v-28l27-8 26 8v28z" fill="url(#hole2)" />
    </g>
    {/* right bottom hole */}
    <g stroke="#0b1240" strokeWidth="3">
      <path d="M1020 1082l-1-150 22-7 25 7 3 150z" fill="url(#hole2)" />
      <path d="M1018 1084q30-16 60 0l2 74h-62z" fill="url(#hole2)" />
      <path d="M993 1162h26q30-12 60 0h29l4 65q-60-22-117 0z" fill="url(#hole2)" />
    </g>
    <path d="M294 1228h170M535 1228h218M830 1228h165M1112 1228h118" stroke="#0b1240" strokeWidth="3" shapeRendering="crispEdges" />
    <g fill="none" stroke="#e5303c" strokeWidth="3">
      <path d="M155 272q45-8 88 0M163 457q45-10 86 2M422 646c60-55 350-60 404-4M440 932c60-48 330-50 396-6M203 934h43M205 1068q25-6 46 0M470 938h36M458 1002q35-8 65 0M468 1218q30-6 62 0" />
      <path d="M624 646h66" />
    </g>
    <circle cx="694" cy="646" r="7" fill="#e5303c" />
    <path d="M620 575v70" stroke="#3fe04a" strokeWidth="4" /><circle cx="619" cy="575" r="8" fill="#3fe04a" />
    <circle cx="608" cy="661" r="10" fill="#2ee6f5" />
  </svg>
);

const viewTools = ["zoomFit", "zoomIn", "zoomOut", "repaint", "render", "shade", "saved", "viewMgr", "datums", "annot", "spin"];

const Viewport = () => (
  <main className="relative grow min-w-0 overflow-hidden bg-linear-to-b from-[#c6dcec] to-[#5a7aab]">
    <div className="absolute left-[646px] top-[7px] h-8 flex items-center gap-[3px] px-1 bg-[#f9f9f9] border border-[#a7acb1]">
      {viewTools.map((t, i) => (
        <button key={t} aria-label={t} className={`h-[23px] flex items-center justify-center ${i > 8 ? "w-6 bg-[#dedee0] border border-[#b7b9bb]" : "w-[23px]"}`}>
          <Icon name={t} />
        </button>
      ))}
    </div>
    <SectionModel />
    <div className="absolute left-[15px] top-[486px] flex flex-col gap-[26px] font-light text-[13px] leading-6 text-[#5f6a79]">
      <p>插入模式</p>
      <p>修剪状态：A</p>
    </div>
  </main>
);

const StatusBar = () => (
  <footer className="relative h-[39px] shrink-0 flex items-center border-t-3 border-[#a0a2a4] bg-[#f0f1f2] text-xs text-[#444]">
    <button aria-label="导航器" className="ml-1.5 mt-1.5 size-[22px] flex items-center justify-center bg-[#e3e4e5] border border-[#aaa]"><Icon name="tree" /></button>
    <button aria-label="浏览器" className="ml-1.5 mt-1.5"><Icon name="globe" className="size-[18px]" /></button>
    <button aria-label="全屏" className="ml-2 mt-1.5"><Icon name="blank" className="size-[18px]" /></button>
    <span className="w-px h-6 bg-[#b0b2b4] ml-3" />
    <span className="size-[5px] rounded-full bg-[#1f5d79] ml-1.5 mb-1.5" />
    <p className="ml-[5px] mb-1 text-[11px]">从上次重新生成起零件'M4X14YC3'未被更改。</p>
    <div className="ml-auto flex items-center pr-[18px]">
      <span className="w-px h-7 bg-[#b0b2b4]" />
      <button aria-label="重新生成" className="ml-1"><Icon name="regenS" /></button>
      <span className="w-px h-7 bg-[#b0b2b4] ml-[41px] mr-0.5" />
      <button aria-label="搜索工具" className="h-6 w-[42px] flex items-center bg-[#fafafa] border border-[#b9bcbf]">
        <Icon name="binoc" className="size-[18px] ml-1" />
        <span className="w-px h-full bg-[#c4c6c8] ml-1 mr-1" />
        <Caret />
      </button>
      <span className="w-px h-7 bg-[#b0b2b4] ml-0.5 mr-0.5" />
      <button aria-label="选择缓冲区" className="w-10 h-7 flex items-center justify-center bg-[#fafafa] border border-[#a5a8ab]"><Icon name="box" className="size-[18px]" /></button>
      <span className="ml-1 w-[93px]">选择了 3 项</span>
      <label className="w-[177px] h-[26px] flex items-center bg-[#fafafa] border border-[#b9bcbf]">
        <select aria-label="选择过滤器" className="grow h-full appearance-none pl-[7px] outline-none"><option>几何</option></select>
        <span className="w-px h-full bg-[#c4c6c8] mr-1" />
        <Caret className="text-[#555] mr-1" />
      </label>
    </div>
    {/* forum watermark over the corner */}
    <div className="absolute -right-[11px] bottom-0 w-[206px] h-[61px] bg-white/35 pointer-events-none text-right">
      <svg viewBox="0 0 60 60" className="absolute left-0 top-0 size-[60px]">
        <g fill="none" strokeLinecap="round">
          <path d="M8 29C0 17 3 5 16 6c14 2 25 14 28 27" stroke="#456f9f" strokeWidth="3" opacity=".9" />
          <path d="M8 29c8 11 20 15 26 10 7-6 3-20-8-28" stroke="#7c99b8" strokeWidth="1.500" opacity=".7" />
          <path d="M45 22c14 2 12 22-1 30-5 4-11 5-13 3" stroke="#d9606c" strokeWidth="4" opacity=".8" />
          <path d="M44 22c-9 2-12 14-7 18" stroke="#d98790" strokeWidth="1.500" opacity=".7" />
        </g>
      </svg>
      <div className="pr-5 text-[29px] leading-10 font-black text-[#3fa27c]/80">野火论坛</div>
      <div className="pr-1 text-[15px] leading-[18px] text-[#a5c4bc]">www.proewildfire.cn</div>
    </div>
  </footer>
);

export default function App() {
  return (
    <div className="h-screen flex flex-col overflow-hidden bg-black font-['Open_Sans','Noto_Sans_CJK_SC',sans-serif]">
      <div className="grow min-h-0 flex">
        <div className="grow min-w-0 flex flex-col bg-[#e2e2e2] border-[#a0a1a2] border-t-3 border-l-3 border-r-4 border-b-4">
          <TitleBar />
          <TabBar />
          <Ribbon />
          <div className="grow min-h-0 flex">
            <Sidebar />
            <Viewport />
          </div>
          <StatusBar />
        </div>
        {/* edge of the window behind */}
        <div className="w-3 shrink-0 flex flex-col bg-[#f0f1f2]">
          <div className="h-[56px] bg-[#e2e2e2] border-t-3 border-[#a0a1a2]" />
          <div className="h-[88px] bg-[#f8f8f8]" />
          <div className="h-[25px] bg-[#eceeef] border-b border-[#8f9aa3]" />
          <div className="grow bg-linear-to-b from-[#c6dcec] to-[#546ba5]" />
          <div className="h-[30px] border-y border-[#bbb] bg-[#fafafa]" />
        </div>
      </div>
      <div className="h-0.5 shrink-0" />
    </div>
  );
}
